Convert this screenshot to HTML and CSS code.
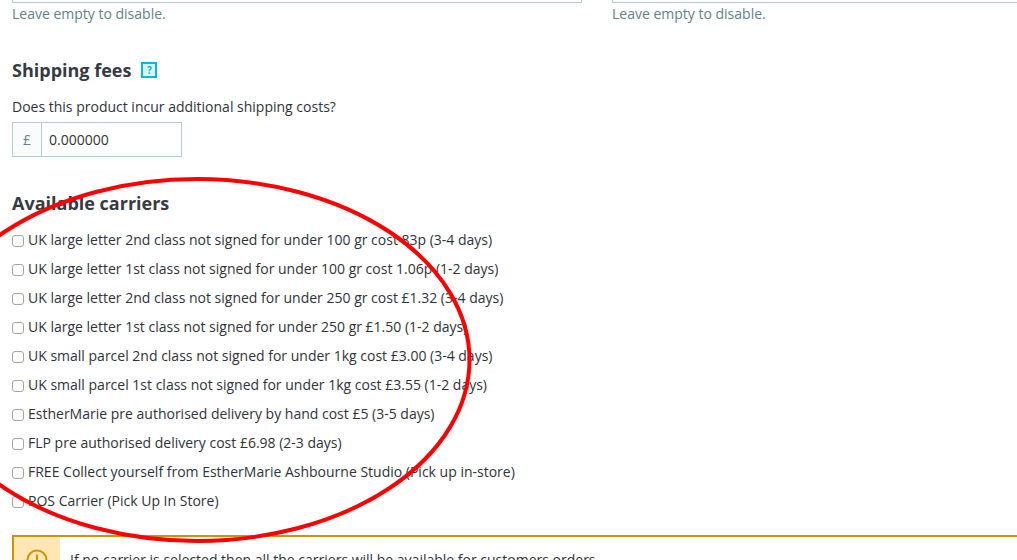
FILE: index.html
```
<!DOCTYPE html>
<html lang="en">
<head>
    <meta charset="UTF-8">
    <meta name="viewport" content="width=device-width, initial-scale=1.0">
    <title>Shipping</title>
    <link rel="stylesheet" href="styles.css">
</head>
<body>
    <main class="shipping">
        <div class="delivery-times">
            <div class="field">
                <input type="text" id="in-stock" class="text-input" aria-label="Delivery time of in-stock products" aria-describedby="in-stock-help">
                <p class="help" id="in-stock-help">Leave empty to disable.</p>
            </div>
            <div class="field field-last">
                <input type="text" id="out-stock" class="text-input" aria-label="Delivery time of out-of-stock products" aria-describedby="out-stock-help">
                <p class="help" id="out-stock-help">Leave empty to disable.</p>
            </div>
        </div>

        <section class="fees">
            <h2>Shipping fees <button type="button" class="help-box">?</button></h2>
            <label for="fee">Does this product incur additional shipping costs?</label>
            <div class="input-group">
                <span class="currency">£</span>
                <input type="text" id="fee" value="0.000000">
            </div>
        </section>

        <section class="carriers">
            <h2>Available carriers</h2>
            <ul class="carrier-list">
                <li><label><input type="checkbox">UK large letter 2nd class not signed for under 100 gr cost 83p (3-4 days)</label></li>
                <li><label><input type="checkbox">UK large letter 1st class not signed for under 100 gr cost 1.06p (1-2 days)</label></li>
                <li><label><input type="checkbox">UK large letter 2nd class not signed for under 250 gr cost £1.32 (3-4 days)</label></li>
                <li><label><input type="checkbox">UK large letter 1st class not signed for under 250 gr £1.50 (1-2 days)</label></li>
                <li><label><input type="checkbox">UK small parcel 2nd class not signed for under 1kg cost £3.00 (3-4 days)</label></li>
                <li><label><input type="checkbox">UK small parcel 1st class not signed for under 1kg cost £3.55 (1-2 days)</label></li>
                <li><label><input type="checkbox">EstherMarie pre authorised delivery by hand cost £5 (3-5 days)</label></li>
                <li><label><input type="checkbox">FLP pre authorised delivery cost £6.98 (2-3 days)</label></li>
                <li><label><input type="checkbox">FREE Collect yourself from EstherMarie Ashbourne Studio (Pick up in-store)</label></li>
                <li><label><input type="checkbox">POS Carrier (Pick Up In Store)</label></li>
            </ul>
        </section>

        <div class="alert">
            <div class="alert-icon">
                <svg width="22" height="22" viewBox="0 0 22 22" fill="none" stroke="#d39300" stroke-width="2">
                    <circle cx="11" cy="11" r="9.5"/>
                    <path d="M11 5.5v7M11 14.5v2"/>
                </svg>
            </div>
            <p>If no carrier is selected then all the carriers will be available for customers orders.</p>
        </div>
    </main>

    <!-- marker ring over the carriers -->
    <svg class="marker" width="550" height="366" viewBox="0 0 550 366" fill="none" aria-hidden="true">
        <ellipse cx="275" cy="183" rx="272.5" ry="181" stroke="#ff0000" stroke-width="4"/>
    </svg>
</body>
</html>
```
FILE: styles.css
```
* {
    box-sizing: border-box;
}

body {
    margin: 0;
    height: 100vh;
    overflow: hidden;
    position: relative;
    font-family: "Open Sans", "Noto Sans", sans-serif;
    font-size: 14px;
    line-height: 20px;
    color: #2f333a;
    background: #fff;
}

/* the view starts at the lower edge of the delivery time inputs */
.shipping {
    margin-top: -32px;
    padding-left: 12px;
}

h2 {
    display: flex;
    align-items: center;
    gap: 10px;
    margin: 0;
    font-size: 18px;
    line-height: 24px;
    font-weight: bold;
    color: #363a41;
}

input,
button {
    font-family: inherit;
    color: inherit;
}

.delivery-times {
    display: grid;
    grid-template-columns: minmax(0, 570px) 1fr;
    gap: 30px;
}

.text-input {
    display: block;
    width: 100%;
    height: 35px;
    border: 1px solid #b3cdd1;
}

.field-last .text-input {
    border-right: 0;
}

.help {
    margin: 1px 0 0;
    color: #5f8389;
}

.fees {
    margin-top: 34px;
}

.fees label {
    display: block;
    margin: 15px 0 5px;
}

.help-box {
    width: 16px;
    height: 16px;
    padding: 0;
    border: 2px solid #00bcd9;
    background: #d9f5fa;
    color: #00bcd9;
    font-size: 10px;
    line-height: 12px;
    font-weight: bold;
}

.input-group {
    display: flex;
    width: 170px;
    height: 35px;
    border: 1px solid #b3cdd1;
}

.currency {
    width: 29px;
    line-height: 33px;
    text-align: center;
    color: #5f8389;
    background: #fafbfc;
    border-right: 1px solid #b3cdd1;
}

.input-group input {
    flex: 1;
    min-width: 0;
    padding: 0 7px;
    border: 0;
    font-size: 14px;
}

.carriers {
    margin-top: 34px;
}

.carrier-list {
    margin: 15px 0 0;
    padding: 0;
    list-style: none;
}

.carrier-list li {
    height: 29px;
}

.carrier-list label {
    display: inline-flex;
    align-items: center;
    gap: 4px;
    white-space: nowrap;
}

.carrier-list input {
    appearance: none;
    width: 12px;
    height: 12px;
    margin: 2px 0 0;
    border: 1px solid #a6a6a6;
    border-radius: 3px;
    background: #fff;
}

.carrier-list input:checked {
    background: #00bcd9;
}

.alert {
    display: flex;
    margin-top: 15px;
    border: 2px solid #d39300;
    border-right: 0;
}

.alert-icon {
    width: 46px;
    padding-top: 12px;
    text-align: center;
    background: #ffe6b3;
}

.alert p {
    margin: 0;
    padding: 13px 10px;
}

.marker {
    position: absolute;
    left: -78px;
    top: 177px;
    pointer-events: none;
}
```
